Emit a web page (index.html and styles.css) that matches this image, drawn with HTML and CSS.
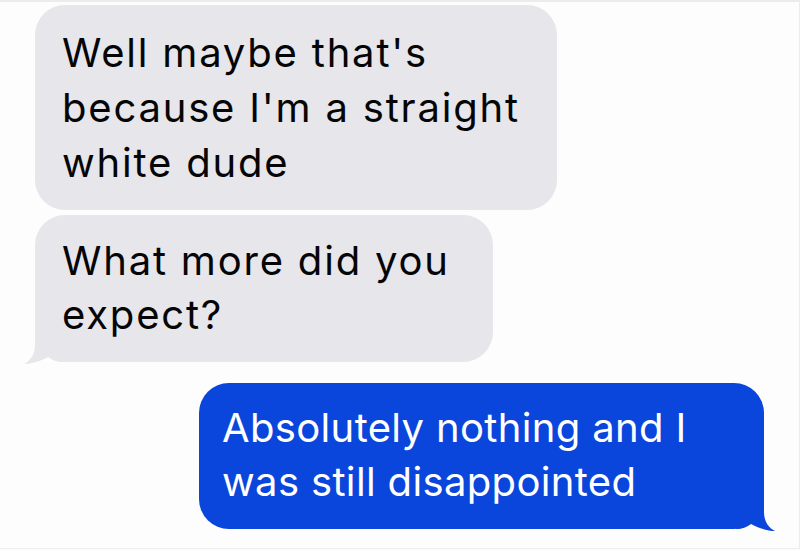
FILE: index.html
```html
<!DOCTYPE html>
<html lang="en">
<head>
    <meta charset="UTF-8">
    <meta name="viewport" content="width=device-width, initial-scale=1.0">
    <title>Messages</title>
    <link rel="stylesheet" href="styles.css">
</head>
<body>
    <div class="frame">
        <div class="chat">
            <div class="bubble received first">
                Well maybe that's<br>because I'm a straight<br>white dude
            </div>
            <div class="bubble received second">
                What more did you<br>expect?
                <svg class="tail tail-left" width="40" height="40" viewBox="0 0 40 40">
                    <path d="M40 0 H12 V20 C12 30 7 36 1 39 C8 39 18 36 25 32 C29 35 34 37 40 37 Z"/>
                </svg>
            </div>
            <div class="bubble sent">
                Absolutely nothing and I<br>was still disappointed
                <svg class="tail tail-right" width="40" height="40" viewBox="0 0 40 40">
                    <path d="M0 0 H28 V20 C28 30 33 36 39 39 C32 39 22 36 15 32 C11 35 6 37 0 37 Z"/>
                </svg>
            </div>
        </div>
    </div>
</body>
</html>
```

FILE: styles.css
```css
body {
    margin: 0;
    padding: 0;
    background-color: #fdfdfd;
    font-family: Inter, "Liberation Sans", Arial, sans-serif;
}
.frame {
    height: 549px;
    box-sizing: border-box;
    border-top: 2px solid #ececec;
    border-right: 1px solid #ececec;
    border-bottom: 1px solid #ececec;
}
.chat {
    display: flex;
    flex-direction: column;
    align-items: flex-start;
    padding: 3px 35px 0 35px;
}
.bubble {
    position: relative;
    box-sizing: border-box;
    font-size: 40px;
    line-height: 54px;
    padding: 19px 0 20px 27px;
    border-radius: 30px;
}
.received {
    background-color: #e6e6eb;
    color: #050505;
    letter-spacing: 1.8px;
}
.first {
    width: 522px;
    line-height: 55px;
    padding-top: 20px;
}
.second {
    width: 458px;
    margin-top: 5px;
}
.sent {
    align-self: flex-end;
    width: 565px;
    margin-top: 21px;
    padding-left: 23px;
    padding-top: 18px;
    background-color: #0a45dc;
    color: #ffffff;
    letter-spacing: 0.35px;
}
.tail {
    position: absolute;
    bottom: -3px;
}
.tail-left {
    left: -12px;
    fill: #e6e6eb;
}
.tail-right {
    right: -12px;
    fill: #0a45dc;
}
```
